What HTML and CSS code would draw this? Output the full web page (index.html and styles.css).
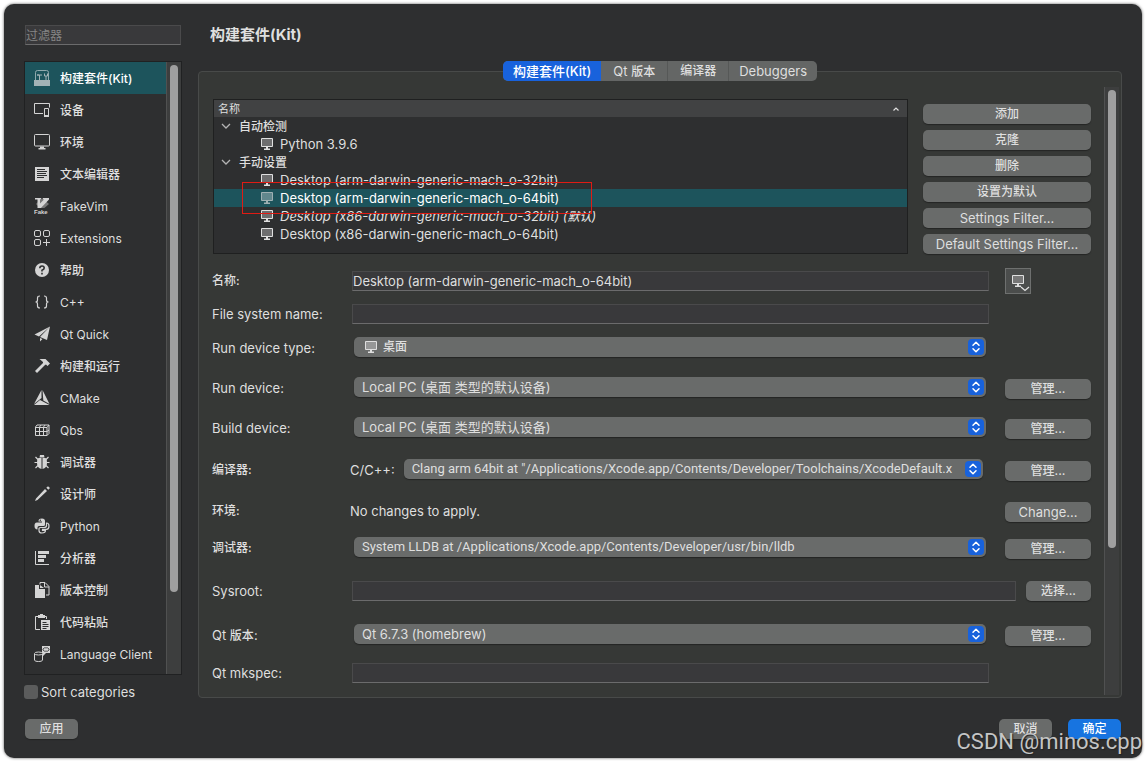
FILE: index.html
```html
<!DOCTYPE html>
<html lang="zh-CN">
<head>
<meta charset="utf-8">
<title>构建套件(Kit)</title>
<link rel="stylesheet" href="styles.css">
</head>
<body>
<svg class="defs" aria-hidden="true">
  <symbol id="monitor" viewBox="0 0 12 12"><path d="M.5.5h11v8H.5z" fill="#fff" fill-opacity=".3" stroke="currentColor"/><path d="M5 9h2v1.500h2V12H3v-1.500h2z" fill="currentColor"/></symbol>
  <symbol id="chevron" viewBox="0 0 10 6"><path d="M1 1l4 4 4-4" fill="none" stroke="currentColor" stroke-width="1.300"/></symbol>
  <symbol id="updown" viewBox="0 0 16 16"><path d="M5 6.300l3-3 3 3M5 9.700l3 3 3-3" fill="none" stroke="#fff" stroke-width="1.500" stroke-linecap="round" stroke-linejoin="round"/></symbol>
</svg>
<div class="dialog">
  <div class="body">
    <aside class="side">
      <input class="field filter" type="text" placeholder="过滤器" aria-label="过滤器">
      <div class="list">
        <nav class="items">
          <button class="item cjk current"><svg class="ico" viewBox="0 0 16 16"><path d="M1.500 10V2.500Q1.500.5 3.500.5h9q2 0 2 2V10" fill="none" stroke="#8fa9ad"/><path d="M0 10h16v6H0z" fill="#a3b3b6"/><path d="M3 5h5M5.500 5v5M4 4v2M10.500 3.500v2.500h3V3.500M12 6v4" fill="none" stroke="#a3b3b6"/></svg>构建套件(Kit)</button>
          <button class="item cjk"><svg class="ico" viewBox="0 0 16 16"><path d="M9 11.500H.5v-10h15v4" fill="none" stroke="currentColor"/><path d="M10.500 6.500h4v8h-4z" fill="none" stroke="currentColor"/><path d="M10 13h5v2h-5z" fill="currentColor"/></svg>设备</button>
          <button class="item cjk"><svg class="ico" viewBox="0 0 16 16"><rect x=".5" y=".5" width="15" height="11.500" rx="1" fill="none" stroke="currentColor"/><path d="M6 12.500h4v1.500h1.500v1.500h-7V14H6z" fill="currentColor"/></svg>环境</button>
          <button class="item cjk"><svg class="ico" viewBox="0 0 16 16"><path d="M1 1h14v14H1z" fill="currentColor"/><path d="M3 3.500h8M3 5.500h10M3 7.500h9M3 9.500h10M3 11.500h7" stroke="#2e2f30"/></svg>文本编辑器</button>
          <button class="item"><svg class="ico" viewBox="0 0 16 16"><path d="M8 0l7 6-7 6-6-6z" fill="#777"/><path d="M1 0h6v1.500H6v4L10 1.500H9V0h6v1.500L6 11H3.500V1.500H1z" fill="currentColor"/><path d="M0 10h16v6H0z" fill="#2e2f30"/><text x="0" y="15.500" class="tiny">Fake</text></svg>FakeVim</button>
          <button class="item"><svg class="ico" viewBox="0 0 16 16" fill="none" stroke="currentColor"><rect x=".5" y=".5" width="6" height="6" rx="1.500"/><rect x="9.500" y=".5" width="6" height="6" rx="1.500"/><rect x=".5" y="9.500" width="6" height="6" rx="1.500"/><path d="M12.500 9v7M9 12.500h7"/></svg>Extensions</button>
          <button class="item cjk"><svg class="ico" viewBox="0 0 16 16"><circle cx="8" cy="8" r="7" fill="currentColor"/><path d="M5.800 6.300Q5.800 4 8 4t2.200 2.100Q10.200 7.500 8 8.300v1.200M8 10.700v1.800" fill="none" stroke="#2e2f30" stroke-width="1.600"/></svg>帮助</button>
          <button class="item"><svg class="ico" viewBox="0 0 16 16" fill="none" stroke="currentColor" stroke-width="1.200"><path d="M6 2Q3.500 2 3.500 4v2q0 2-2 2 2 0 2 2v2q0 2 2.500 2M10 2q2.500 0 2.500 2v2q0 2 2 2-2 0-2 2v2q0 2-2.500 2"/></svg>C++</button>
          <button class="item"><svg class="ico" viewBox="0 0 16 16" fill="currentColor"><path d="M16 .5L.5 8.500l4.500 2zM16 .5L6 11l7 3zM6 12l2.500 1L6 15.500z"/></svg>Qt Quick</button>
          <button class="item cjk"><svg class="ico" viewBox="0 0 16 16" fill="currentColor"><path d="M5.500 1h6l4.500 4.500-2.500 2.500-1.500-1.500-1 .5-8 8-2-2 8-8V4z"/></svg>构建和运行</button>
          <button class="item"><svg class="ico" viewBox="0 0 16 16" fill="currentColor"><path d="M7.500 0L0 14l7.500-6zM8.500 0l.8 10.500L15.500 14zM0 15l6-5 9.500 5z"/></svg>CMake</button>
          <button class="item"><svg class="ico" viewBox="0 0 16 16" fill="none" stroke="currentColor"><path d="M1.500 5v8.500h11.500l2-2V3H3zM1.500 5.500H13v8M5.500 5v8.500M9.500 5v8.500M1.500 9.500H13l2-1.500M13 5.500L15 3M5.500 5L7 3M9.500 5L11 3"/></svg>Qbs</button>
          <button class="item cjk"><svg class="ico" viewBox="0 0 16 16"><path d="M5.500 3.500L6 1h4l.5 2.500zM7.500 4v11Q3 14 3 9t2-5zM8.500 4v11Q13 14 13 9t-2-5z" fill="currentColor"/><path d="M1.500 3l3 3M14.500 3l-3 3M.5 8.500H4M15.500 8.500H12M1.500 14L4 11.500M14.500 14L12 11.500" stroke="currentColor" stroke-width="1.200"/></svg>调试器</button>
          <button class="item cjk"><svg class="ico" viewBox="0 0 16 16" fill="currentColor"><path d="M11 3l2 2L3.500 14 1 15l1-2.500zM12.300 1.800L14 .3 16 2l-1.700 1.800z"/></svg>设计师</button>
          <button class="item"><svg class="ico" viewBox="0 0 16 16"><path d="M8 .5c-3 0-3.500 1-3.500 3H8v1H3C1 4.500.5 6 .5 8s1 3.500 3 3.500V9.500Q3.500 8 5 8h4.500Q11 8 11 6.500V3Q11 .5 8 .5z" fill="currentColor"/><path d="M12.500 5c2 0 2.500 1.500 2.500 3s-.8 3.300-2.500 3.300H8.500v1h3c0 2-1 2.700-3.500 2.700s-3-1-3-2.500V10.500Q5 9.500 6.500 9.500H10q2.500 0 2.500-2z" fill="none" stroke="currentColor" stroke-width="1.200"/><circle cx="6.300" cy="2.300" r=".7" fill="#2e2f30"/></svg>Python</button>
          <button class="item cjk"><svg class="ico" viewBox="0 0 16 16"><path d="M1.500 1v13.500H15" fill="none" stroke="currentColor"/><path d="M4 1h11v3H4zM4 5h8v3H4zM4 9h6v3H4z" fill="currentColor"/></svg>分析器</button>
          <button class="item cjk"><svg class="ico" viewBox="0 0 16 16"><path d="M1 3h4v4h6v9H1zM6 3l4 3H6z" fill="currentColor"/><path d="M6 2.500V.5h5l4 4v8.500h-3M10.500 1v4H15" fill="none" stroke="currentColor"/></svg>版本控制</button>
          <button class="item cjk"><svg class="ico" viewBox="0 0 16 16"><path d="M6 15.500H1.500v-13h11V5" fill="none" stroke="currentColor"/><path d="M4 1h2V0h3v1h2v3H4zM7 6h9v10H7z" fill="currentColor"/><path d="M8.500 8.500h4M8.500 10.500h6M8.500 12.500h6M8.500 14.500h4" stroke="#2e2f30"/></svg>代码粘贴</button>
          <button class="item"><svg class="ico" viewBox="0 0 16 16"><path d="M.5 8v6c0 2 8 2 8 0V8" fill="none" stroke="currentColor"/><ellipse cx="4.500" cy="7.500" rx="4" ry="1.500" fill="none" stroke="currentColor"/><path d="M8 0h8v7h-4l-3 3V7H8z" fill="currentColor"/><path d="M10.500 1.500L9 3.500l1.500 2M13.500 1.500l1.500 2-1.500 2M12 1v1.500M12 4.500V6" fill="none" stroke="#2e2f30"/></svg>Language Client</button>
        </nav>
        <div class="track"><div class="thumb side-thumb"></div></div>
      </div>
      <label class="sort"><input type="checkbox">Sort categories</label>
    </aside>
    <main class="main">
      <h1>构建套件(Kit)</h1>
      <div class="tabs">
        <button class="tab active">构建套件(Kit)</button>
        <button class="tab">Qt <span class="cjk">版本</span></button>
        <button class="tab cjk">编译器</button>
        <button class="tab">Debuggers</button>
      </div>
      <section class="panel">
        <div class="content">
          <div class="kits">
            <div class="tree">
              <div class="head">名称<svg class="sorter" viewBox="0 0 6 4"><path d="M.5 3.500L3 1l2.500 2.500" fill="none" stroke="#e0e0e0" stroke-width="1.200"/></svg></div>
              <div class="row group cjk"><svg class="chev"><use href="#chevron"/></svg>自动检测</div>
              <div class="row leaf"><svg class="mon"><use href="#monitor"/></svg>Python 3.9.6</div>
              <div class="row group cjk"><svg class="chev"><use href="#chevron"/></svg>手动设置</div>
              <div class="row leaf"><svg class="mon"><use href="#monitor"/></svg>Desktop (arm-darwin-generic-mach_o-32bit)</div>
              <div class="row leaf chosen"><svg class="mon"><use href="#monitor"/></svg>Desktop (arm-darwin-generic-mach_o-64bit)</div>
              <div class="row leaf default"><svg class="mon"><use href="#monitor"/></svg><span>Desktop (x86-darwin-generic-mach_o-32bit) (<span class="cjk">默认</span>)</span></div>
              <div class="row leaf"><svg class="mon"><use href="#monitor"/></svg>Desktop (x86-darwin-generic-mach_o-64bit)</div>
              <div class="mark"></div>
            </div>
            <div class="ops">
              <button class="btn cjk">添加</button>
              <button class="btn cjk">克隆</button>
              <button class="btn cjk">删除</button>
              <button class="btn cjk">设置为默认</button>
              <button class="btn">Settings Filter...</button>
              <button class="btn">Default Settings Filter...</button>
            </div>
          </div>
          <div class="form">
            <label class="cjk" for="name">名称:</label>
            <input class="field" id="name" type="text" value="Desktop (arm-darwin-generic-mach_o-64bit)">
            <button class="picker" aria-label="图标"><svg viewBox="0 0 24 24"><path d="M6.500 6.500h11v8h-11z" fill="#777" stroke="#e0e0e0"/><path d="M11 15h2v1.500h2V18H9v-1.500h2z" fill="#e0e0e0"/><path d="M15 18l4 3.500 4-3.500" fill="none" stroke="#e0e0e0" stroke-width="1.300"/></svg></button>

            <label for="fs">File system name:</label>
            <input class="field" id="fs" type="text">

            <label for="type">Run device type:</label>
            <div class="pick with-icon"><select class="cjk" id="type"><option>桌面</option></select><svg class="mon"><use href="#monitor"/></svg><svg class="knob"><use href="#updown"/></svg></div>

            <label for="run">Run device:</label>
            <div class="pick"><select id="run"><option>Local PC (桌面 类型的默认设备)</option></select><svg class="knob"><use href="#updown"/></svg></div>
            <button class="btn act cjk">管理...</button>

            <label for="build">Build device:</label>
            <div class="pick"><select id="build"><option>Local PC (桌面 类型的默认设备)</option></select><svg class="knob"><use href="#updown"/></svg></div>
            <button class="btn act cjk">管理...</button>

            <label class="cjk" for="cc">编译器:</label>
            <div class="compiler"><span>C/C++:</span><div class="pick"><select class="long" id="cc"><option>Clang arm 64bit at "/Applications/Xcode.app/Contents/Developer/Toolchains/XcodeDefault.x</option></select><svg class="knob"><use href="#updown"/></svg></div></div>
            <button class="btn act cjk">管理...</button>

            <span class="cjk">环境:</span>
            <span class="note">No changes to apply.</span>
            <button class="btn act">Change...</button>

            <label class="cjk" for="dbg">调试器:</label>
            <div class="pick"><select class="long" id="dbg"><option>System LLDB at /Applications/Xcode.app/Contents/Developer/usr/bin/lldb</option></select><svg class="knob"><use href="#updown"/></svg></div>
            <button class="btn act cjk">管理...</button>

            <label for="sys">Sysroot:</label>
            <div class="path"><input class="field" id="sys" type="text"><button class="btn cjk">选择...</button></div>

            <label for="qt">Qt <span class="cjk">版本</span>:</label>
            <div class="pick"><select id="qt"><option>Qt 6.7.3 (homebrew)</option></select><svg class="knob"><use href="#updown"/></svg></div>
            <button class="btn act cjk">管理...</button>

            <label for="mk">Qt mkspec:</label>
            <input class="field" id="mk" type="text">
          </div>
        </div>
        <div class="track"><div class="thumb main-thumb"></div></div>
      </section>
    </main>
  </div>
  <footer class="footer">
    <button class="btn small cjk">应用</button>
    <span class="spacer"></span>
    <button class="btn small cjk">取消</button>
    <button class="btn small cjk primary">确定</button>
  </footer>
  <div class="watermark">CSDN @minos.cpp</div>
</div>
</body>
</html>
```
FILE: styles.css
```css
* { box-sizing: border-box; }
body {
  margin: 0;
  padding: 4px;
  height: 100vh;
  background: #fff;
  color: #dfdfdf;
  font: 13px/18px Inter, "Noto Sans CJK SC", sans-serif;
}
button, input, select { font: inherit; color: inherit; margin: 0; border: 0; padding: 0; }
svg { flex: none; display: block; }
.defs { display: none; }
.cjk { font-size: 12px; font-weight: 500; }

.dialog {
  position: relative;
  height: 100%;
  display: flex;
  flex-direction: column;
  gap: 20px;
  padding: 21px 20px 19px;
  background: #2e2f30;
  border-radius: 10px;
  box-shadow: 0 0 3px #555;
}
.body { flex: 1; min-height: 0; display: flex; gap: 16px; }

.side { width: 158px; display: flex; flex-direction: column; }
.field {
  width: 100%;
  height: 20px;
  background: #39393b;
  border: 1px solid #4a4a4b;
  border-bottom-color: #6b6b6c;
}
.filter { width: auto; margin: 0 1px 16px; font-size: 12px; }
.filter::placeholder { color: #858585; opacity: 1; }
.list {
  flex: 1;
  min-height: 0;
  display: flex;
  border: 1px solid #202122;
  overflow: hidden;
}
.items { flex: 1; }
.item {
  width: 100%;
  height: 32px;
  display: flex;
  align-items: center;
  gap: 10px;
  padding: 2px 0 0 9px;
  background: none;
  font-size: 12px;
  white-space: nowrap;
}
.item.current { background: #1d545c; color: #fff; }
.ico { width: 16px; height: 16px; margin-bottom: 2px; color: #d4d4d4; }
.tiny { font: bold 6px "Liberation Sans", sans-serif; fill: #d4d4d4; }
.track { width: 15px; padding: 3px; background: #3d3e3e; border-left: 1px solid #505151; }
.thumb { width: 8px; border-radius: 4px; background: #9f9f9f; }
.side-thumb { height: 87%; }
.main-thumb { height: 76%; }
.sort { display: flex; align-items: center; gap: 3px; height: 14px; margin-top: 10px; }
.sort input { appearance: none; width: 14px; height: 14px; border-radius: 3px; background: #5b5c5c; }

.main { flex: 1; min-width: 0; display: flex; flex-direction: column; padding-bottom: 1px; }
h1 { margin: 0 0 16px 12px; font-size: 15px; line-height: 20px; font-weight: 700; }
.tabs {
  position: relative;
  align-self: center;
  display: flex;
  height: 20px;
  border-radius: 5px;
  overflow: hidden;
  background: #646665;
}
.tab { padding: 0 10px; background: none; border-left: 1px solid #565857; }
.tab.cjk { padding: 0 12px; }
.tab.active { background: #1862dc; color: #fff; border: 0; font-weight: 500; }
.tab:nth-child(2) { border: 0; padding: 0 12px; }
.panel {
  flex: 1;
  min-height: 0;
  display: flex;
  gap: 13px;
  margin-top: -10px;
  padding: 15px 2px 2px 14px;
  background: #363836;
  border: 1px solid #484a49;
  border-radius: 4px;
}
.content { flex: 1; min-width: 0; padding-top: 12px; }
.kits { display: flex; gap: 15px; }
.tree {
  position: relative;
  flex: 1;
  padding-bottom: 8px;
  background: #2e2f30;
  border: 1px solid #1f2020;
}
.head {
  display: flex;
  justify-content: space-between;
  align-items: center;
  height: 17px;
  padding: 0 8px 0 4px;
  background: #414243;
  font-size: 11px;
}
.sorter { width: 6px; height: 4px; }
.row { display: flex; align-items: center; height: 18px; white-space: nowrap; }
.group { padding: 2px 0 0 7px; gap: 8px; }
.chev { width: 10px; height: 6px; margin-bottom: 2px; color: #b4b4b4; }
.leaf { padding-left: 47px; gap: 7px; }
.mon { width: 12px; height: 12px; }
.chosen { background: #1d545c; color: #fff; }
.chosen .mon { color: #9fb0b3; }
.default { font-style: italic; }
.mark {
  position: absolute;
  left: 28px;
  top: 82px;
  width: 350px;
  height: 32px;
  border: 1px solid #e01b14;
}
.ops { width: 168px; padding-top: 5px; display: flex; flex-direction: column; gap: 6px; }
.btn {
  height: 20px;
  border-radius: 5px;
  background: #696b6a;
  box-shadow: 0 1px 1px #242524;
  white-space: nowrap;
}

.form {
  display: grid;
  grid-template-columns: 138px 1fr 86px;
  grid-template-rows: 36px 30px 38px 42px 38px 46px 36px 38px 48px 40px 36px;
  align-items: center;
  margin: 9px 0 0 -1px;
}
.form > :is(label, span.cjk) { grid-column: 1; }
.form > .field { width: auto; margin: 0 16px 0 2px; }
.act { margin-top: 2px; }
.picker {
  width: 26px;
  height: 26px;
  background: #4b4d4c;
  border: 1px solid #6e706f;
}
.pick { position: relative; margin: 0 19px 2px 4px; }
.pick select {
  display: block;
  width: 100%;
  height: 20px;
  padding: 0 20px 0 8px;
  appearance: none;
  border-radius: 5px;
  background: #696b6a;
  box-shadow: 0 1px 1px #242524;
}
.pick .long { font-family: Roboto, "Noto Sans CJK SC", sans-serif; }
.with-icon select { padding-left: 29px; }
.pick .mon { position: absolute; left: 11px; top: 4px; }
.knob {
  position: absolute;
  right: 2px;
  top: 2px;
  width: 16px;
  height: 16px;
  border-radius: 4px;
  background: #1862dc;
}
.compiler { display: flex; align-items: center; gap: 9px; min-width: 0; }
.compiler .pick { flex: 1; min-width: 0; margin: 0 22px 2px 0; }
.path { grid-column: 2 / 4; display: flex; gap: 10px; padding-left: 2px; }
.path .field { flex: 1; }
.path .btn { width: 65px; }

.footer { display: flex; gap: 16px; padding: 0 1px; }
.small { width: 53px; }
.spacer { flex: 1; }
.primary { background: #1774e0; color: #fff; }
.watermark {
  position: absolute;
  right: 0;
  bottom: 3px;
  font: 22px/26px Roboto, sans-serif;
  color: #c4c5c5;
  text-shadow: 1px 1px 1px #222;
}
```
